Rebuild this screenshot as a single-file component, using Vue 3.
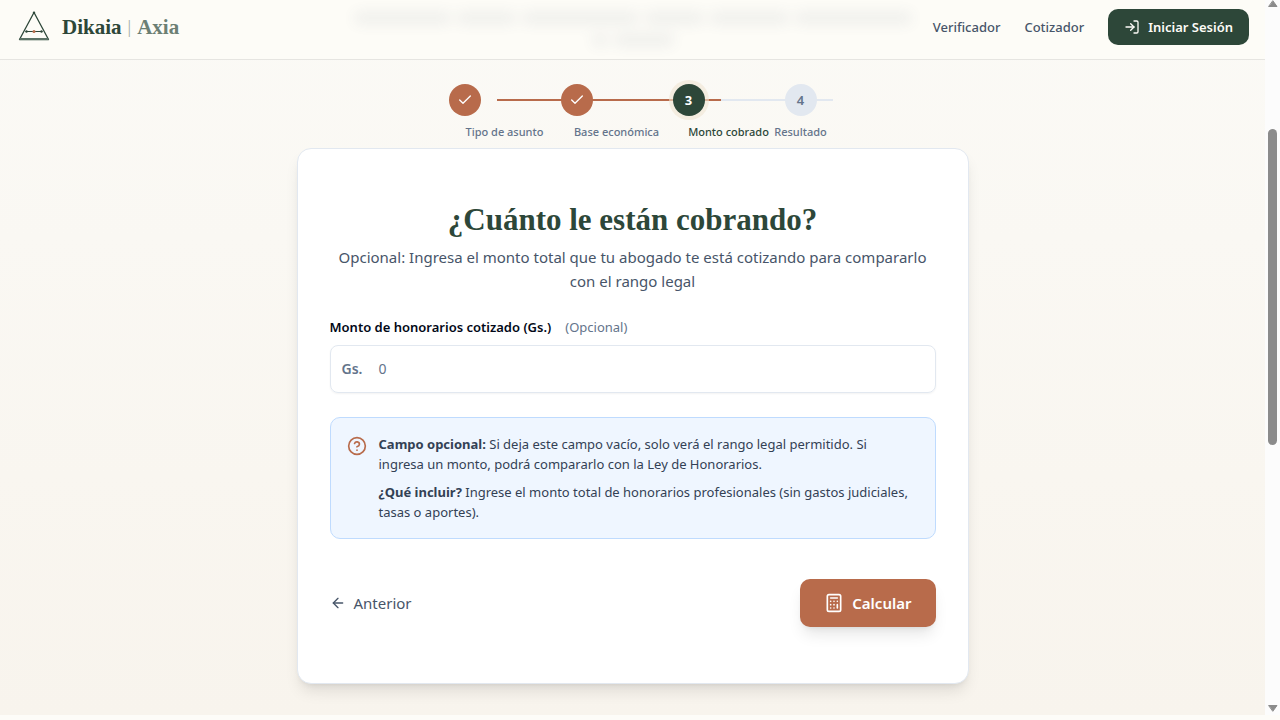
<script setup>
import { ref } from 'vue'

const amount = ref('')
const steps = [
  { n: 1, label: 'Tipo de asunto', state: 'done' },
  { n: 2, label: 'Base económica', state: 'done' },
  { n: 3, label: 'Monto cobrado', state: 'current' },
  { n: 4, label: 'Resultado', state: 'todo' }
]
</script>

<template>
  <div class="screen">
    <div class="page">
      <header class="topbar">
        <div class="haze" aria-hidden="true">
          <div class="haze-row"><i class="w5"></i><i class="w3"></i><i class="w6"></i><i class="w3"></i><i class="w4"></i><i class="w6"></i></div>
          <div class="haze-row short"><i class="w1"></i><i class="w4"></i></div>
        </div>
        <a class="brand" href="#">
          <svg class="logo" viewBox="0 0 32 32" fill="none" aria-hidden="true">
            <path d="M16 1.5 L1.5 28.5 H30.5 Z" stroke="#2d4739" stroke-width="1.3" stroke-linejoin="round" />
            <path d="M1.5 28 H30.5" stroke="#5c7266" stroke-width="2" stroke-linecap="butt" />
            <path d="M8 20.5 H24" stroke="#2d4739" stroke-width="1" />
            <circle cx="16" cy="1.7" r="1.2" fill="#2d4739" />
            <circle cx="8.5" cy="20.5" r="1.2" fill="#2d4739" />
            <circle cx="23.5" cy="20.5" r="1.2" fill="#2d4739" />
            <circle cx="16" cy="20.5" r="1.5" fill="#b86b4b" />
          </svg>
          <span class="name">Dikaia</span>
          <span class="bar">|</span>
          <span class="name soft">Axia</span>
        </a>
        <nav class="nav">
          <a href="#">Verificador</a>
          <a href="#">Cotizador</a>
          <button class="login" type="button">
            <svg viewBox="0 0 24 24" aria-hidden="true">
              <path d="M15 3h4a2 2 0 0 1 2 2v14a2 2 0 0 1-2 2h-4" />
              <path d="m10 17 5-5-5-5" />
              <path d="M15 12H3" />
            </svg>
            Iniciar Sesión
          </button>
        </nav>
      </header>

      <main class="content">
        <ol class="steps">
          <li v-for="s in steps" :key="s.n" :class="s.state">
            <span class="dot">
              <svg v-if="s.state === 'done'" viewBox="0 0 24 24" aria-hidden="true"><path d="M20 6 9 17l-5-5" /></svg>
              <template v-else>{{ s.n }}</template>
            </span>
            <span class="step-label">{{ s.label }}</span>
          </li>
        </ol>

        <form class="card" @submit.prevent>
          <h1>¿Cuánto le están cobrando?</h1>
          <p class="lead">Opcional: Ingresa el monto total que tu abogado te está cotizando para compararlo con el rango legal</p>

          <div class="label-row">
            <label for="amount">Monto de honorarios cotizado (Gs.)</label>
            <span class="optional">(Opcional)</span>
          </div>
          <div class="field">
            <span class="prefix">Gs.</span>
            <input id="amount" v-model="amount" type="text" inputmode="numeric" placeholder="0" />
          </div>

          <div class="info">
            <svg viewBox="0 0 24 24" aria-hidden="true">
              <circle cx="12" cy="12" r="10" />
              <path d="M9.09 9a3 3 0 0 1 5.83 1c0 2-3 3-3 3" />
              <path d="M12 17h.01" />
            </svg>
            <div>
              <p><strong>Campo opcional:</strong> Si deja este campo vacío, solo verá el rango legal permitido. Si ingresa un monto, podrá compararlo con la Ley de Honorarios.</p>
              <p><strong>¿Qué incluir?</strong> Ingrese el monto total de honorarios profesionales (sin gastos judiciales, tasas o aportes).</p>
            </div>
          </div>

          <div class="actions">
            <button class="back" type="button">
              <svg viewBox="0 0 24 24" aria-hidden="true"><path d="m12 19-7-7 7-7" /><path d="M19 12H5" /></svg>
              Anterior
            </button>
            <button class="calc" type="submit">
              <svg viewBox="0 0 24 24" aria-hidden="true">
                <rect width="16" height="20" x="4" y="2" rx="2" />
                <path d="M8 6h8M16 14v4M16 10h.01M12 10h.01M8 10h.01M12 14h.01M8 14h.01M12 18h.01M8 18h.01" />
              </svg>
              Calcular
            </button>
          </div>
        </form>
      </main>
    </div>

    <div class="scrollbar" aria-hidden="true">
      <svg viewBox="0 0 10 7"><path d="M5 1 9 6.5H1Z" /></svg>
      <div class="track"><div class="thumb"></div></div>
      <svg viewBox="0 0 10 7"><path d="M5 6 9 .5H1Z" /></svg>
    </div>
  </div>
</template>

<style>
body {
  margin: 0;
  background: #fdfcf8;
}
</style>

<style scoped>
* {
  box-sizing: border-box;
}
.screen {
  display: grid;
  grid-template-columns: minmax(0, 1fr) 15px;
  min-height: calc(100vh - 5px);
  font-family: "Noto Sans", "Open Sans", sans-serif;
  font-size: 15px;
  line-height: 24px;
  color: #475569;
}
.page {
  display: flex;
  flex-direction: column;
  background: linear-gradient(#fbfaf6, #f8f4ed);
}
svg {
  flex: none;
  fill: none;
  stroke: currentColor;
  stroke-width: 2;
  stroke-linecap: round;
  stroke-linejoin: round;
}
button {
  font: inherit;
  border: 0;
  cursor: pointer;
  display: flex;
  align-items: center;
}
a {
  color: inherit;
  text-decoration: none;
}
.topbar {
  position: relative;
  display: flex;
  align-items: center;
  justify-content: space-between;
  height: 60px;
  padding: 0 16px 6px 18px;
  background: #fdfcf7;
  border-bottom: 1px solid #e6e5e1;
}
.haze {
  position: absolute;
  inset: 12px 0 auto;
  display: grid;
  justify-items: center;
  gap: 10px;
  filter: blur(7px);
  opacity: 0.08;
}
.haze-row {
  display: flex;
  gap: 8px;
  width: 556px;
}
.haze-row.short {
  width: 80px;
}
.haze i {
  height: 12px;
  background: #475569;
}
.w1 { flex: 1; }
.w3 { flex: 3; }
.w4 { flex: 4; }
.w5 { flex: 5; }
.w6 { flex: 6; }
.brand {
  position: relative;
  display: flex;
  align-items: center;
  gap: 6px;
  font-family: "Liberation Serif", serif;
  font-size: 21px;
}
.logo {
  width: 32px;
  height: 32px;
  margin-right: 6px;
  stroke: none;
}
.name {
  font-weight: 700;
  color: #2d4739;
}
.soft {
  color: #6c7f74;
}
.bar {
  font-size: 18px;
  color: #a3aea6;
}
.nav {
  position: relative;
  display: flex;
  align-items: center;
  gap: 24px;
  font-size: 13px;
  font-weight: 500;
}
.login {
  gap: 8px;
  height: 36px;
  padding: 0 16px;
  border-radius: 10px;
  background: #2d4739;
  color: #fdfcf7;
  font-weight: 600;
}
.login svg {
  width: 16px;
  height: 16px;
}
.content {
  flex: 1;
  display: flex;
  flex-direction: column;
  align-items: center;
  padding: 24px 16px 31px;
}
.steps {
  display: flex;
  width: 368px;
  margin: 0 0 8px;
  padding: 0;
  list-style: none;
}
.steps li {
  position: relative;
  flex: 1;
  min-width: 0;
  display: flex;
  flex-direction: column;
  align-items: center;
  gap: 8px;
}
.steps li:last-child {
  flex: 0 0 32px;
}
.steps li:not(:last-child)::before {
  content: "";
  position: absolute;
  top: 15px;
  left: 48px;
  width: 100%;
  height: 2px;
  background: #b86b4b;
}
.steps li.current::before {
  background: #e2e8f0;
}
.dot {
  z-index: 1;
  align-self: flex-start;
  display: grid;
  place-items: center;
  width: 32px;
  height: 32px;
  border-radius: 50%;
  background: #e2e8f0;
  color: #64748b;
  font-size: 13px;
  font-weight: 600;
}
.dot svg {
  width: 16px;
  height: 16px;
}
.done .dot {
  background: #b86b4b;
  color: #fff;
}
.current .dot {
  background: #2d4739;
  color: #fff;
  font-weight: 700;
  box-shadow: 0 0 0 4px rgba(240, 228, 210, 0.6);
}
.step-label {
  white-space: nowrap;
  font-size: 11px;
  line-height: 16px;
  font-weight: 500;
  color: #64748b;
}
.current .step-label {
  color: #2d4739;
}
.card {
  width: 100%;
  max-width: 672px;
  padding: 56px 32px;
  background: #fff;
  border: 1px solid #e2e8f0;
  border-radius: 14px;
  box-shadow: 0 10px 15px -3px rgba(0, 0, 0, 0.1), 0 4px 6px -4px rgba(0, 0, 0, 0.1);
}
h1 {
  margin: 0 0 10px;
  font-family: "Liberation Serif", serif;
  font-size: 31px;
  line-height: 30px;
  font-weight: 700;
  text-align: center;
  color: #2d4739;
}
.lead {
  margin: 0 0 24px;
  text-align: center;
}
.label-row {
  display: flex;
  gap: 14px;
  margin-bottom: 8px;
  font-size: 13px;
  line-height: 20px;
}
.label-row label {
  font-weight: 600;
  color: #020817;
}
.optional {
  color: #64748b;
}
.field {
  display: flex;
  align-items: center;
  gap: 16px;
  height: 48px;
  padding: 0 11px;
  border: 1px solid #e2e8f0;
  border-radius: 8px;
  box-shadow: 0 1px 2px rgba(0, 0, 0, 0.05);
}
.prefix {
  font-size: 14px;
  font-weight: 600;
  color: #64748b;
}
.field input {
  flex: 1;
  min-width: 0;
  padding: 0;
  border: 0;
  outline: 0;
  background: none;
  font: inherit;
  font-size: 14px;
  color: #0f172a;
}
.field input::placeholder {
  color: #64748b;
}
.info {
  display: flex;
  gap: 12px;
  margin: 24px 0 40px;
  padding: 16px 22px 16px 16px;
  border: 1px solid #bfdbfe;
  border-radius: 10px;
  background: #eff6ff;
  font-size: 13px;
  line-height: 20px;
  color: #334155;
}
.info svg {
  width: 20px;
  height: 20px;
  margin-top: 2px;
  color: #b86b4b;
}
.info p {
  margin: 0;
}
.info p + p {
  margin-top: 8px;
}
.actions {
  display: flex;
  align-items: center;
  justify-content: space-between;
}
.back {
  gap: 8px;
  padding: 0;
  background: none;
  color: #475569;
}
.back svg {
  width: 16px;
  height: 16px;
}
.calc {
  gap: 8px;
  height: 48px;
  padding: 0 24px;
  border-radius: 10px;
  background: #b86b4b;
  color: #fff;
  font-weight: 600;
  box-shadow: 0 10px 15px -3px rgba(0, 0, 0, 0.1), 0 4px 6px -4px rgba(0, 0, 0, 0.1);
}
.calc svg {
  width: 20px;
  height: 20px;
}
.scrollbar {
  display: flex;
  flex-direction: column;
  align-items: center;
  padding: 0 0 3px;
  background: #fcfcfc;
}
.scrollbar svg {
  width: 10px;
  height: 7px;
  fill: #8b8b8b;
  stroke: #8b8b8b;
  stroke-width: 1;
}
.track {
  flex: 1;
  width: 9px;
  padding-top: 122px;
}
.thumb {
  height: 316px;
  border-radius: 5px;
  background: #8b8b8b;
}
</style>
